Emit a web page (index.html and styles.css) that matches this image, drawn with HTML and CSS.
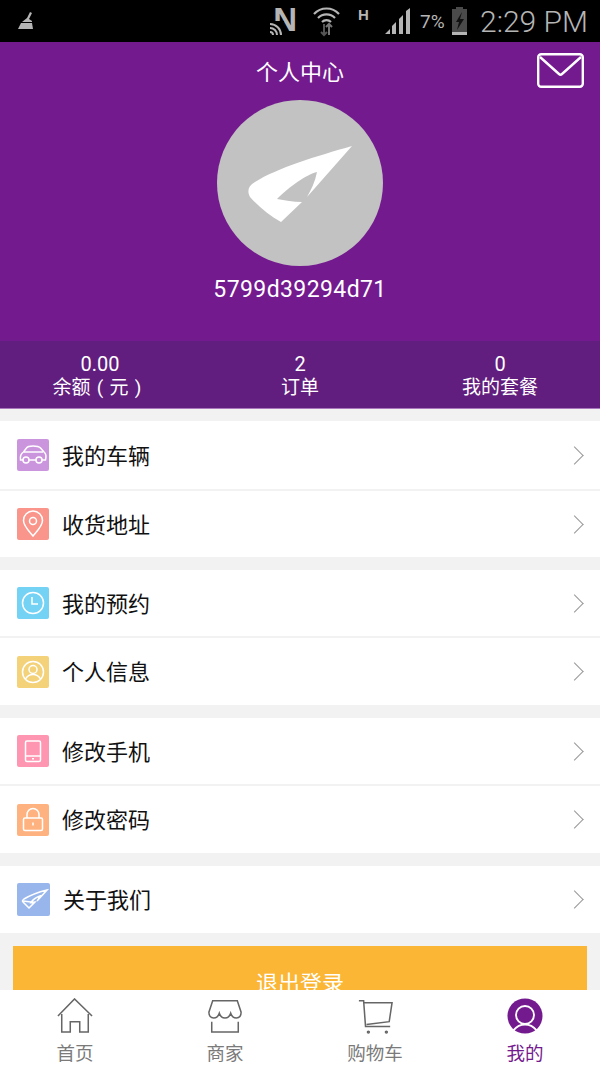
FILE: index.html
```html
<!DOCTYPE html>
<html lang="zh-CN">

<head>
    <meta charset="UTF-8">
    <meta name="viewport" content="width=device-width, initial-scale=1.0">
    <title>个人中心</title>
    <link rel="stylesheet" href="styles.css">
</head>

<body>
    <div class="status-bar">
        <svg width="16" height="18" viewBox="0 0 16 18">
            <path d="M12 0l2 1-3 6 3 2v1H4l5-4z" fill="#b5b5b5" />
            <path d="M3 11h11l1 6H0z" fill="#b5b5b5" />
        </svg>
        <div class="status-right">
            <span class="status-n">N
                <svg class="status-nfc" width="14" height="14" viewBox="0 0 14 14">
                    <path d="M0 3a11 11 0 0 1 11 11M0 7a7 7 0 0 1 7 7M0 11a3 3 0 0 1 3 3" fill="none" stroke="#b5b5b5" stroke-width="2" />
                </svg>
            </span>
            <svg class="status-wifi" width="27" height="32" viewBox="0 0 27 32">
                <path d="M1 9a17 17 0 0 1 25 0M5 13a12 12 0 0 1 17 0M9 17a6.500 6.500 0 0 1 9 0" fill="none" stroke="#b5b5b5" stroke-width="2.200" />
                <path d="M11 19v11M8 27l3 3 3-3" fill="none" stroke="#555" stroke-width="2" />
                <path d="M16 30V19M13 22l3-3 3 3" fill="none" stroke="#777" stroke-width="2" />
            </svg>
            <span class="status-h">H</span>
            <svg class="status-signal" width="25" height="26" viewBox="0 0 25 26">
                <path d="M0 26l5-5v5zM7 26v-8l4-4v12zM14 26V11l4-4v19zM21 26V3l4-3v26z" fill="#b5b5b5" />
            </svg>
            <span class="status-pct">7%</span>
            <svg class="status-batt" width="17" height="28" viewBox="0 0 17 28">
                <path d="M5 0h7v2h4v26H1V2h4z" fill="#4a4a4a" />
                <path d="M1 25h15v3H1z" fill="#b5b5b5" />
                <path d="M11 5l-6 10h3l-2 8 7-11H9z" fill="#111" />
            </svg>
            <span class="status-time">2:29 PM</span>
        </div>
    </div>

    <div class="profile">
        <div class="profile-title">个人中心</div>
        <svg class="profile-mail" width="47" height="35" viewBox="0 0 47 35">
            <rect x="1.200" y="1.200" width="44.600" height="32.600" rx="3" fill="none" stroke="#fff" stroke-width="2.400" />
            <path d="M3 4l19 17q1.500 1.300 3 0L44 4" fill="none" stroke="#fff" stroke-width="2.400" />
        </svg>
        <div class="avatar">
            <svg width="166" height="166" viewBox="0 0 166 166">
                <path d="M135 46C100 56 60 68 38 82 31 86 30 91 33 97 42 107 52 115 64 122L85 102C76 102 68 100 60 99 72 87 90 74 100 72 98 82 94 90 90 97Z" fill="#fff" />
            </svg>
        </div>
        <div class="profile-name">5799d39294d71</div>
    </div>

    <div class="stats">
        <div class="stat"><span class="stat-num">0.00</span><span class="stat-label">余额<span class="paren">(</span>元<span class="paren">)</span></span></div>
        <div class="stat"><span class="stat-num">2</span><span class="stat-label">订单</span></div>
        <div class="stat"><span class="stat-num">0</span><span class="stat-label">我的套餐</span></div>
    </div>

    <div class="menu-group menu-group-first">
        <div class="menu-row">
            <span class="menu-icon icon-car">
                <svg width="32" height="32" viewBox="0 0 32 32" class="line-icon">
                    <path d="M6 21H3.500c-.5-3 0-6 3-8l3-4c1-1.500 3-2 6.500-2s6 .5 7.500 2l3.500 4c2 1.500 2.500 4 1.500 8H25M12 21h7" />
                    <circle cx="9" cy="21" r="3" />
                    <circle cx="22" cy="21" r="3" />
                    <path d="M7 13h19" />
                </svg>
            </span>
            <span class="menu-text">我的车辆</span>
            <span class="chevron"></span>
        </div>
        <div class="menu-row">
            <span class="menu-icon icon-pin">
                <svg width="32" height="32" viewBox="0 0 32 32" class="line-icon">
                    <path d="M16 28C12 23 6.500 18 6.500 12.500a9.500 9.500 0 0 1 19 0C25.500 18 20 23 16 28z" />
                    <circle cx="16" cy="13" r="3.500" />
                </svg>
            </span>
            <span class="menu-text">收货地址</span>
            <span class="chevron"></span>
        </div>
    </div>

    <div class="menu-group">
        <div class="menu-row">
            <span class="menu-icon icon-clock">
                <svg width="32" height="32" viewBox="0 0 32 32" class="line-icon">
                    <circle cx="16" cy="16" r="10.500" />
                    <path d="M15 10v7h6" />
                </svg>
            </span>
            <span class="menu-text">我的预约</span>
            <span class="chevron"></span>
        </div>
        <div class="menu-row">
            <span class="menu-icon icon-user">
                <svg width="32" height="32" viewBox="0 0 32 32" class="line-icon">
                    <circle cx="16" cy="16" r="10.500" />
                    <circle cx="16" cy="13.500" r="4" />
                    <path d="M8.500 23c2-3.500 5-4.500 7.500-4.500s5.500 1 7.500 4.500" />
                </svg>
            </span>
            <span class="menu-text">个人信息</span>
            <span class="chevron"></span>
        </div>
    </div>

    <div class="menu-group">
        <div class="menu-row">
            <span class="menu-icon icon-phone">
                <svg width="32" height="32" viewBox="0 0 32 32" class="line-icon">
                    <rect x="8.500" y="6" width="15" height="20.500" rx="1.500" />
                    <path d="M8.500 21h15" />
                    <path d="M15 23.700h2" />
                </svg>
            </span>
            <span class="menu-text">修改手机</span>
            <span class="chevron"></span>
        </div>
        <div class="menu-row">
            <span class="menu-icon icon-lock">
                <svg width="32" height="32" viewBox="0 0 32 32" class="line-icon">
                    <rect x="6.500" y="14" width="19" height="12.500" rx="1.500" />
                    <path d="M10 14v-3.500a6 6 0 0 1 12 0V14M16 18.500v3" />
                </svg>
            </span>
            <span class="menu-text">修改密码</span>
            <span class="chevron"></span>
        </div>
    </div>

    <div class="menu-group">
        <div class="menu-row">
            <span class="menu-icon menu-icon-big icon-plane">
                <svg width="33" height="33" viewBox="0 0 33 33" class="line-icon">
                    <path d="M30 7C22 9 12 13 7 16c-1.500 1-2 2-1 3l6 6 6-6-4 .5c2-3 6-5.500 9-6.500-1 2-2 4-3 5z" />
                    <path d="M6 18l8 1" />
                </svg>
            </span>
            <span class="menu-text">关于我们</span>
            <span class="chevron"></span>
        </div>
    </div>

    <button class="logout">退出登录</button>

    <div class="tabbar">
        <div class="tab">
            <svg width="38" height="38" viewBox="0 0 38 38" class="tab-icon">
                <path d="M1 19L18.500 1 37 19" />
                <path d="M5 17v19h9V25h10v11h9V17" />
            </svg>
            <span>首页</span>
        </div>
        <div class="tab">
            <svg width="36" height="38" viewBox="0 0 36 38" class="tab-icon">
                <path d="M5 3h26l4 12c0 4-2 6-5 6s-5-2-6-5c-1 3-3 5-6 5s-5-2-6-5c-1 3-3 5-6 5s-5-2-5-6z" />
                <path d="M4 25v11h28V25" />
            </svg>
            <span>商家</span>
        </div>
        <div class="tab">
            <svg width="38" height="38" viewBox="0 0 38 38" class="tab-icon">
                <path d="M2 3h5l2 27h26" />
                <path d="M7 5h30l-3 20-24 3" />
                <circle cx="12" cy="36" r="1" />
                <circle cx="31" cy="36" r="1" />
            </svg>
            <span>购物车</span>
        </div>
        <div class="tab tab-active">
            <svg width="38" height="38" viewBox="0 0 38 38">
                <circle cx="19" cy="19" r="18.500" fill="#741a8f" />
                <circle cx="19" cy="18" r="9.500" fill="none" stroke="#fff" stroke-width="2" />
                <path d="M7 34c4-5 8-6 12-6s8 1 12 6" fill="none" stroke="#fff" stroke-width="2" />
            </svg>
            <span>我的</span>
        </div>
    </div>
</body>

</html>
```

FILE: styles.css
```css
* {
    box-sizing: border-box;
}

html,
body {
    height: 1067px;
    overflow: hidden;
}

body {
    font-family: Roboto, 'Noto Sans CJK SC', sans-serif;
    background-color: #f2f2f2;
    margin: 0;
    padding: 0;
    color: #111;
}

.status-bar {
    height: 42px;
    background-color: #000;
    color: #b5b5b5;
    display: flex;
    align-items: center;
    justify-content: space-between;
    padding: 0 12px 0 18px;
}

.status-right {
    display: flex;
    align-items: center;
}

.status-n {
    width: 27px;
    height: 28px;
    position: relative;
    font-family: 'Liberation Sans', sans-serif;
    font-weight: bold;
    font-size: 33px;
    line-height: 26px;
    text-align: right;
    margin-right: 16px;
}

.status-nfc {
    position: absolute;
    left: 0;
    bottom: 0;
    background-color: #000;
}

.status-wifi {
    margin-right: 18px;
}

.status-h {
    width: 12px;
    font-family: 'Liberation Sans', sans-serif;
    font-weight: bold;
    font-size: 15px;
    margin: 0 15px 14px 0;
}

.status-signal {
    margin-right: 10px;
}

.status-pct {
    width: 25px;
    font-size: 19px;
    margin-right: 6px;
}

.status-time {
    font-size: 30px;
    font-weight: 300;
    margin-left: 12px;
}

.profile {
    height: 299px;
    background-color: #741a8f;
    color: #fff;
    position: relative;
    display: flex;
    flex-direction: column;
    align-items: center;
    padding-top: 15px;
}

.profile-title {
    font-size: 22px;
    line-height: 32px;
}

.profile-mail {
    position: absolute;
    top: 11px;
    right: 16px;
}

.avatar {
    width: 166px;
    height: 166px;
    border-radius: 50%;
    background-color: #c2c2c2;
    margin-top: 11px;
}

.avatar svg {
    display: block;
}

.profile-name {
    font-size: 23px;
    line-height: 30px;
    margin-top: 9px;
    letter-spacing: 0.4px;
}

.stats {
    height: 68px;
    background-color: #611e7e;
    color: #fff;
    display: flex;
    border-bottom: 1px solid #a878bd;
    margin-bottom: 12px;
    padding-top: 12px;
}

.stat {
    flex: 1;
    display: flex;
    flex-direction: column;
    align-items: center;
    font-size: 19px;
    line-height: 23px;
}

.stat-num {
    font-size: 20px;
}

.stat-label {
    white-space: nowrap;
}

.paren {
    display: inline-block;
    width: 19px;
    text-align: center;
}

.menu-group {
    background-color: #fff;
    margin-bottom: 13px;
}

.menu-row {
    height: 68px;
    display: flex;
    align-items: center;
    padding-left: 17px;
    padding-right: 17px;
    border-bottom: 2px solid #f2f2f2;
}

.menu-row:last-child {
    height: 67px;
    border-bottom: none;
}

.menu-group-first .menu-row {
    height: 70px;
}

.menu-group-first .menu-row:last-child {
    height: 66px;
}

.menu-icon {
    width: 32px;
    height: 32px;
    border-radius: 2px;
    flex-shrink: 0;
    margin-right: 13px;
}

.menu-icon svg {
    display: block;
}

.menu-icon-big {
    width: 33px;
    height: 33px;
}

.line-icon,
.tab-icon {
    fill: none;
}

.line-icon {
    stroke: #fff;
    stroke-width: 1.5;
}

.tab-icon {
    stroke: #666;
    stroke-width: 1.6;
}

.icon-car {
    background-color: #cb95de;
}

.icon-pin {
    background-color: #f9958a;
}

.icon-clock {
    background-color: #74d2f5;
}

.icon-user {
    background-color: #f4d27a;
}

.icon-phone {
    background-color: #fe96b1;
}

.icon-lock {
    background-color: #feb27f;
}

.icon-plane {
    background-color: #98b6ec;
}

.menu-text {
    font-size: 22px;
    flex: 1;
    padding-bottom: 3px;
}

.chevron {
    width: 13px;
    height: 13px;
    border-top: 1.5px solid #999;
    border-right: 1.5px solid #999;
    transform: rotate(45deg);
    margin-right: 2px;
}

.logout {
    display: block;
    width: 574px;
    height: 68px;
    margin: 0 13px;
    border: none;
    background-color: #fbb635;
    color: #fff;
    font-family: inherit;
    font-size: 22px;
    padding: 2px 0 0;
}

/* fixed over the end of the page, cuts the button off */
.tabbar {
    position: fixed;
    left: 0;
    right: 0;
    bottom: 0;
    height: 77px;
    background-color: #fff;
    display: flex;
    padding-top: 8px;
}

.tab {
    flex: 1;
    display: flex;
    flex-direction: column;
    align-items: center;
    font-size: 18.5px;
    line-height: 26px;
    color: #7a7a7a;
}

.tab svg {
    display: block;
    margin-bottom: 7px;
}

.tab-active {
    color: #741a8f;
}
```
